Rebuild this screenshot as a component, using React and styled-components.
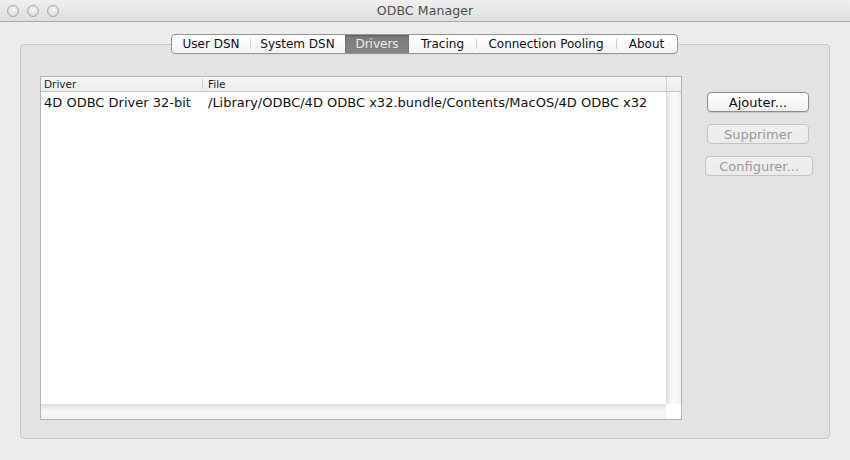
import React from "react";
import styled, { createGlobalStyle, css } from "styled-components";

const GlobalStyle = createGlobalStyle`
  html, body { margin: 0; padding: 0; background: #ececec; }
  body { font-family: "DejaVu Sans", "Noto Sans", sans-serif; color: #111; }
  * { box-sizing: border-box; }
`;

const Window = styled.div`
  width: 850px;
  height: 460px;
  display: flex;
  flex-direction: column;
  background: #ececec;
  overflow: hidden;
`;

const TitleBar = styled.div`
  height: 22px;
  display: grid;
  grid-template-columns: 1fr auto 1fr;
  align-items: center;
  background: linear-gradient(#efefef, #dedede);
  border-bottom: 1px solid #a9a9a9;
`;

const Lights = styled.div`
  display: flex;
  gap: 8px;
  padding-left: 7px;
`;

const Light = styled.span`
  width: 12px;
  height: 12px;
  border-radius: 50%;
  border: 1px solid #a6a6a6;
  background: radial-gradient(circle at 50% 35%, #f7f7f7, #dcdcdc 75%);
`;

const Title = styled.div`
  font-size: 12.5px;
  color: #4e4e4e;
  letter-spacing: 0.1px;
`;

const Body = styled.div`
  flex: 1;
  padding: 22px 20px 21px;
  display: flex;
`;

const GroupBox = styled.div`
  flex: 1;
  display: flex;
  flex-direction: column;
  background: #e3e3e3;
  border: 1px solid #c8c8c8;
  border-radius: 4px;
`;

const TabStrip = styled.div`
  align-self: center;
  margin-top: -11px;
  margin-left: -1px;
  height: 20px;
  display: flex;
  border: 1px solid #959595;
  border-radius: 4px;
  overflow: hidden;
  background: linear-gradient(#ffffff, #f3f3f3);
  box-shadow: 0 1px 0 rgba(0, 0, 0, 0.04);
`;

const Tab = styled.div`
  position: relative;
  width: ${(p) => p.$w}px;
  display: flex;
  align-items: center;
  justify-content: center;
  font-size: 12px;
  color: #111;
  ${(p) =>
    p.$divider &&
    css`
      &::before {
        content: "";
        position: absolute;
        left: 0;
        top: 4px;
        bottom: 4px;
        width: 1px;
        background: #cfcfcf;
      }
    `}
  ${(p) =>
    p.$active &&
    css`
      background: linear-gradient(#7a7a7a, #858585);
      color: #ededed;
      box-shadow: inset 0 1px 2px rgba(0, 0, 0, 0.25);
    `}
`;

const Content = styled.div`
  flex: 1;
  display: flex;
  padding: 22px 0 0 19px;
`;

const Table = styled.div`
  width: 642px;
  height: 344px;
  border: 1px solid #b4b4b4;
  background: #fff;
  display: grid;
  grid-template-columns: 1fr 15px;
  grid-template-rows: 15px 1fr 15px;
`;

const Header = styled.div`
  display: flex;
  background: linear-gradient(#f7f7f7, #ececec);
  border-bottom: 1px solid #c4c4c4;
  font-size: 10.5px;
  color: #1c1c1c;
`;

const HeaderCell = styled.div`
  width: ${(p) => (p.$w ? `${p.$w}px` : "auto")};
  flex: ${(p) => (p.$w ? "none" : "1")};
  position: relative;
  display: flex;
  align-items: center;
  padding-left: ${(p) => p.$pad}px;
  ${(p) =>
    p.$divider &&
    css`
      &::after {
        content: "";
        position: absolute;
        right: 0;
        top: 2px;
        bottom: 2px;
        width: 1px;
        background: #c8c8c8;
      }
    `}
`;

const HeaderCorner = styled.div`
  background: linear-gradient(#f7f7f7, #ececec);
  border-bottom: 1px solid #c4c4c4;
  border-left: 1px solid #cfcfcf;
`;

const Rows = styled.div`
  display: flex;
  flex-direction: column;
  padding-top: 1px;
`;

const Row = styled.div`
  display: flex;
  height: 18px;
  align-items: center;
  font-size: 13px;
  color: #111;
`;

const Cell = styled.div`
  width: ${(p) => (p.$w ? `${p.$w}px` : "auto")};
  flex: ${(p) => (p.$w ? "none" : "1")};
  padding-left: ${(p) => p.$pad}px;
  white-space: nowrap;
  overflow: hidden;
`;

const VTrack = styled.div`
  background: linear-gradient(to right, #e4e4e4, #f6f6f6 30%, #f9f9f9 60%, #efefef);
  border-left: 1px solid #dedede;
`;

const HTrack = styled.div`
  background: linear-gradient(#e2e2e2, #f4f4f4 35%, #f8f8f8 65%, #efefef);
  border-top: 1px solid #dadada;
`;

const Corner = styled.div`
  background: #fff;
`;

const Side = styled.div`
  padding: 16px 0 0 23px;
  width: 131px;
  display: flex;
  flex-direction: column;
  gap: 12px;
`;

const Button = styled.div`
  width: ${(p) => p.$w}px;
  margin-left: ${(p) => p.$ml || 0}px;
  height: 20px;
  border-radius: 4px;
  display: flex;
  align-items: center;
  justify-content: center;
  font-size: 13px;
  border: 1px solid ${(p) => (p.$disabled ? "#c3c3c3" : "#8c8c8c")};
  color: ${(p) => (p.$disabled ? "#9a9a9a" : "#111")};
  box-shadow: ${(p) => (p.$disabled ? "none" : "0 1px 1px rgba(0,0,0,0.12)")};
  background: ${(p) =>
    p.$disabled ? "linear-gradient(#f0f0f0, #ebebeb)" : "linear-gradient(#ffffff, #f1f1f1)"};
`;

const tabs = [
  { label: "User DSN", w: 78 },
  { label: "System DSN", w: 95 },
  { label: "Drivers", w: 64, active: true },
  { label: "Tracing", w: 67 },
  { label: "Connection Pooling", w: 140 },
  { label: "About", w: 61 },
];

const drivers = [
  {
    name: "4D ODBC Driver 32-bit",
    file: "/Library/ODBC/4D ODBC x32.bundle/Contents/MacOS/4D ODBC x32",
  },
];

export default function App() {
  return (
    <>
      <GlobalStyle />
      <Window>
        <TitleBar>
          <Lights>
            <Light />
            <Light />
            <Light />
          </Lights>
          <Title>ODBC Manager</Title>
          <div />
        </TitleBar>
        <Body>
          <GroupBox>
            <TabStrip>
              {tabs.map((t, i) => {
                const prev = tabs[i - 1];
                const divider = i > 0 && !t.active && !(prev && prev.active);
                return (
                  <Tab key={t.label} $w={t.w} $active={t.active} $divider={divider}>
                    {t.label}
                  </Tab>
                );
              })}
            </TabStrip>
            <Content>
              <Table>
                <Header>
                  <HeaderCell $w={162} $pad={3} $divider>
                    Driver
                  </HeaderCell>
                  <HeaderCell $pad={5}>File</HeaderCell>
                </Header>
                <HeaderCorner />
                <Rows>
                  {drivers.map((d) => (
                    <Row key={d.name}>
                      <Cell $w={163} $pad={3}>
                        {d.name}
                      </Cell>
                      <Cell $pad={4}>{d.file}</Cell>
                    </Row>
                  ))}
                </Rows>
                <VTrack />
                <HTrack />
                <Corner />
              </Table>
              <Side>
                <Button $w={102} $ml={2}>Ajouter...</Button>
                <Button $w={102} $ml={2} $disabled>
                  Supprimer
                </Button>
                <Button $w={108} $disabled>
                  Configurer...
                </Button>
              </Side>
            </Content>
          </GroupBox>
        </Body>
      </Window>
    </>
  );
}
